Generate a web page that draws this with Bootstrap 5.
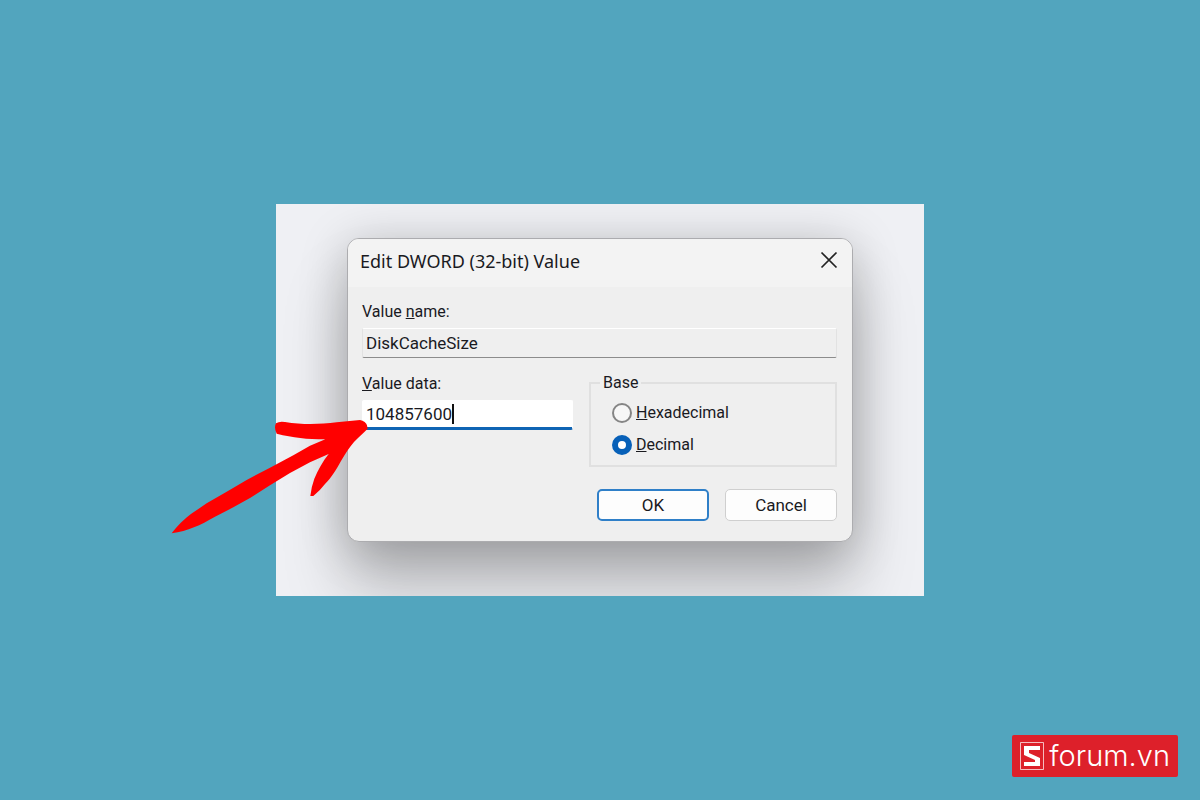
<!DOCTYPE html>
<html lang="en">
<head>
<meta charset="utf-8">
<meta name="viewport" content="width=device-width, initial-scale=1">
<title>Edit DWORD (32-bit) Value</title>
<link href="https://cdn.jsdelivr.net/npm/bootstrap@5.3.0/dist/css/bootstrap.min.css" rel="stylesheet">
<style>
  body { background: #52a5be; font-family: Roboto, "Liberation Sans", sans-serif; font-size: 16px; line-height: 24px; color: #1a1a1f; }
  .stage { max-width: 648px; }
  .backdrop-panel { background: #eff0f4; padding: 34px 71px 54px; }
  .dword-dialog { background: #efefef; border: 1px solid #acacaf; border-radius: 12px; box-shadow: 0 48px 64px rgba(0, 0, 0, .22), 0 6px 48px rgba(0, 0, 0, .22); }
  .title-strip { background: #f3f3f3; border-radius: 11px 11px 0 0; padding: 0 11px 4px 12px; height: 48px; font-family: "Noto Sans", sans-serif; }
  .title-strip h1 { font-size: 18px; line-height: 24px; }
  .close-btn { width: 24px; height: 24px; line-height: 0; color: #222; }
  .dialog-form { padding: 13px 15px 20px 14px; }
  .edit-box { height: 30px; padding: 0 3px; border: 1px solid #e2e2e2; border-radius: 2px; background: #efefef; color: inherit; line-height: 28px; font-size: 17px; }
  .edit-box:read-only { border-top-color: #fff; border-bottom: 1px solid #8c8c8c; }
  .edit-box:focus { outline: 0; }
  .edit-box.edit-active { background: #fff; border-color: #fff; border-bottom: 3px solid #0f64b4; }
  .text-caret { width: 2px; height: 20px; left: 90px; top: 4px; background: #111; }
  .fields-row { margin-top: 10px; }
  .data-col { width: 211px; }
  .base-col { width: 248px; }
  .base-group { border: 2px solid #e0e0e0; height: 94px; margin-top: 5px; padding: 0 21px; }
  .base-group legend { float: none; width: auto; font-size: 16px; line-height: 20px; margin-left: -12px; padding: 0 3px; }
  .base-radio { appearance: none; width: 20px; height: 20px; border: 2px solid #858585; border-radius: 50%; background: #f7f7f7; }
  .base-radio:checked { background: #fff; border: 6px solid #0760b8; }
  .button-row { margin-top: 22px; }
  .dlg-btn { width: 112px; height: 32px; border-radius: 5px; background: #fdfdfd; border: 1px solid #cfcfcf; color: inherit; font-size: 17px; }
  .dlg-btn-default { border: 2px solid #2f7fc8; }
  .arrow-mark { left: -106px; top: 214px; }
  .site-mark { right: 22px; bottom: 23px; height: 42px; padding: 0 8px; border-radius: 2px; background: #dd202a; font-family: Inter, sans-serif; font-weight: 300; font-size: 29px; line-height: 40px; }
</style>
</head>
<body>
<main class="min-vh-100 d-flex align-items-center justify-content-center position-relative">
  <div class="stage w-100 position-relative">
    <div class="backdrop-panel overflow-hidden">
      <section class="dword-dialog" role="dialog" aria-labelledby="dlgTitle">
        <header class="title-strip d-flex align-items-center justify-content-between">
          <h1 id="dlgTitle" class="m-0 fw-normal">Edit DWORD (32-bit) Value</h1>
          <button type="button" class="close-btn btn p-0 border-0" aria-label="Close">
            <svg width="24" height="24" viewBox="0 0 24 24" fill="none" stroke="currentColor" stroke-width="1.7"><path d="M4.500 3.500l15 15M19.500 3.500l-15 15"/></svg>
          </button>
        </header>
        <form class="dialog-form">
          <label for="valueName" class="d-block mb-1">Value <u>n</u>ame:</label>
          <input id="valueName" class="edit-box w-100 d-block" type="text" value="DiskCacheSize" readonly>
          <div class="fields-row d-flex justify-content-between">
            <div class="data-col pt-1">
              <label for="valueData" class="d-block mb-1"><u>V</u>alue data:</label>
              <div class="position-relative">
                <input id="valueData" class="edit-box edit-active w-100 d-block" type="text" value="104857600">
                <span class="text-caret position-absolute"></span>
              </div>
            </div>
            <fieldset class="base-col base-group">
              <legend class="mb-2">Base</legend>
              <div class="d-flex align-items-center gap-1 mb-2">
                <input class="base-radio m-0" type="radio" name="base" id="hex">
                <label for="hex"><u>H</u>exadecimal</label>
              </div>
              <div class="d-flex align-items-center gap-1">
                <input class="base-radio m-0" type="radio" name="base" id="dec" checked>
                <label for="dec"><u>D</u>ecimal</label>
              </div>
            </fieldset>
          </div>
          <div class="button-row d-flex justify-content-end gap-3">
            <button type="button" class="dlg-btn dlg-btn-default p-0">OK</button>
            <button type="button" class="dlg-btn p-0">Cancel</button>
          </div>
        </form>
      </section>
    </div>
    <svg class="arrow-mark position-absolute" width="200" height="120" viewBox="30 144 600 360" aria-hidden="true">
      <path fill="#f00" d="M35 490C50 470 75 445 96 430L140 400L200 365L260 330L330 293L400 256L450 227L496 208C440 208 400 203 350 191Q341 173 348 160Q358 153 375 156C430 165 480 163 530 157L600 150Q622 153 623 176C610 190 596 200 582 216C568 232 556 252 543 273C527 302 515 322 495 342Q480 362 460 378L451 378Q454 350 463 326C474 300 488 275 506 252L450 277L390 309L330 346L270 384L220 412L165 440C120 466 85 482 35 490Z"/>
    </svg>
  </div>
  <a href="#" class="site-mark position-absolute d-flex align-items-center text-white text-decoration-none">
    <svg width="25" height="28" viewBox="0 0 25 28" aria-hidden="true"><path fill="none" stroke="#fff" stroke-opacity=".7" d="M.5.500h23v27H.5z"/><path fill="#fff" d="M4 4h16v4H9v3l11 5v8H4v-4h11v-2L4 13z"/></svg>
    <span class="ms-1">forum.vn</span>
  </a>
</main>
<script src="https://cdn.jsdelivr.net/npm/bootstrap@5.3.0/dist/js/bootstrap.bundle.min.js"></script>
</body>
</html>
